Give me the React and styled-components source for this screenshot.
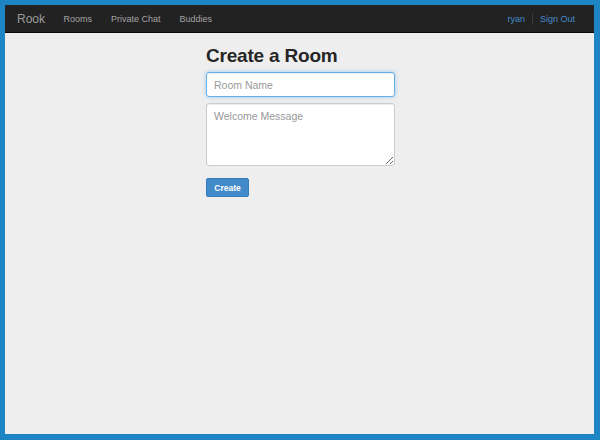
import styled, { createGlobalStyle } from 'styled-components';

const GlobalStyle = createGlobalStyle`
  html, body {
    margin: 0;
    padding: 0;
    height: 100%;
  }
  body {
    font-family: "Liberation Sans", Arial, sans-serif;
    background: #1e85c4;
  }
  #root {
    height: 100%;
  }
`;

const Frame = styled.div`
  box-sizing: border-box;
  height: 440px;
  width: 600px;
  padding: 5px 6px 6px 5px;
  background: #1e85c4;
  display: flex;
`;

const Page = styled.div`
  flex: 1;
  background: #eeeeee;
  display: flex;
  flex-direction: column;
`;

const Navbar = styled.nav`
  height: 27px;
  background: #222222;
  border-bottom: 1px solid #080808;
  display: flex;
  align-items: center;
  padding: 0 12px 0 12px;
`;

const Brand = styled.span`
  color: #9d9d9d;
  font-size: 12px;
  margin-right: 9px;
`;

const NavLinks = styled.div`
  display: flex;
  align-items: center;
  flex: 1;
`;

const NavLink = styled.a`
  color: ${(p) => (p.$blue ? '#428bca' : '#a3a3a3')};
  font-size: 9px;
  padding: 0 ${(p) => (p.$blue ? '7px' : '9.5px')};
  text-decoration: none;
`;

const Divider = styled.span`
  width: 1px;
  height: 12px;
  background: #3a3a3a;
`;

const Content = styled.main`
  display: flex;
  justify-content: center;
  padding-top: 12px;
`;

const Form = styled.form`
  width: 189px;
  margin-left: 2px;
  display: flex;
  flex-direction: column;
`;

const Title = styled.h2`
  margin: 0 0 5px;
  font-size: 19px;
  font-weight: bold;
  color: #262626;
  letter-spacing: -0.2px;
  line-height: 22px;
`;

const Field = styled.input`
  box-sizing: border-box;
  height: 25px;
  padding: 0 7px;
  font-family: inherit;
  font-size: 10.5px;
  border: 1px solid #66afe9;
  border-radius: 3px;
  background: #fff;
  outline: none;
  box-shadow: inset 0 1px 1px rgba(0, 0, 0, 0.075), 0 0 4px rgba(102, 175, 233, 0.6);
  margin-bottom: 6px;

  &::placeholder {
    color: #999;
  }
`;

const Area = styled.textarea`
  box-sizing: border-box;
  height: 63px;
  padding: 6px 7px;
  font-family: inherit;
  font-size: 10.5px;
  border: 1px solid #cccccc;
  border-radius: 3px;
  background: #fff;
  outline: none;
  box-shadow: inset 0 1px 1px rgba(0, 0, 0, 0.075);
  resize: vertical;
  margin-bottom: 12px;

  &::placeholder {
    color: #999;
  }
`;

const Button = styled.button`
  align-self: flex-start;
  width: 43px;
  height: 19px;
  padding: 0;
  background: #428bca;
  border: 1px solid #357ebd;
  border-radius: 2px;
  color: #fff;
  font-family: inherit;
  font-size: 8.5px;
  font-weight: bold;
`;

export default function App() {
  return (
    <>
      <GlobalStyle />
      <Frame>
        <Page>
          <Navbar>
            <Brand>Rook</Brand>
            <NavLinks>
              <NavLink>Rooms</NavLink>
              <NavLink>Private Chat</NavLink>
              <NavLink>Buddies</NavLink>
            </NavLinks>
            <NavLink $blue>ryan</NavLink>
            <Divider />
            <NavLink $blue>Sign Out</NavLink>
          </Navbar>
          <Content>
            <Form onSubmit={(e) => e.preventDefault()}>
              <Title>Create a Room</Title>
              <Field placeholder="Room Name" />
              <Area placeholder="Welcome Message" />
              <Button type="submit">Create</Button>
            </Form>
          </Content>
        </Page>
      </Frame>
    </>
  );
}
